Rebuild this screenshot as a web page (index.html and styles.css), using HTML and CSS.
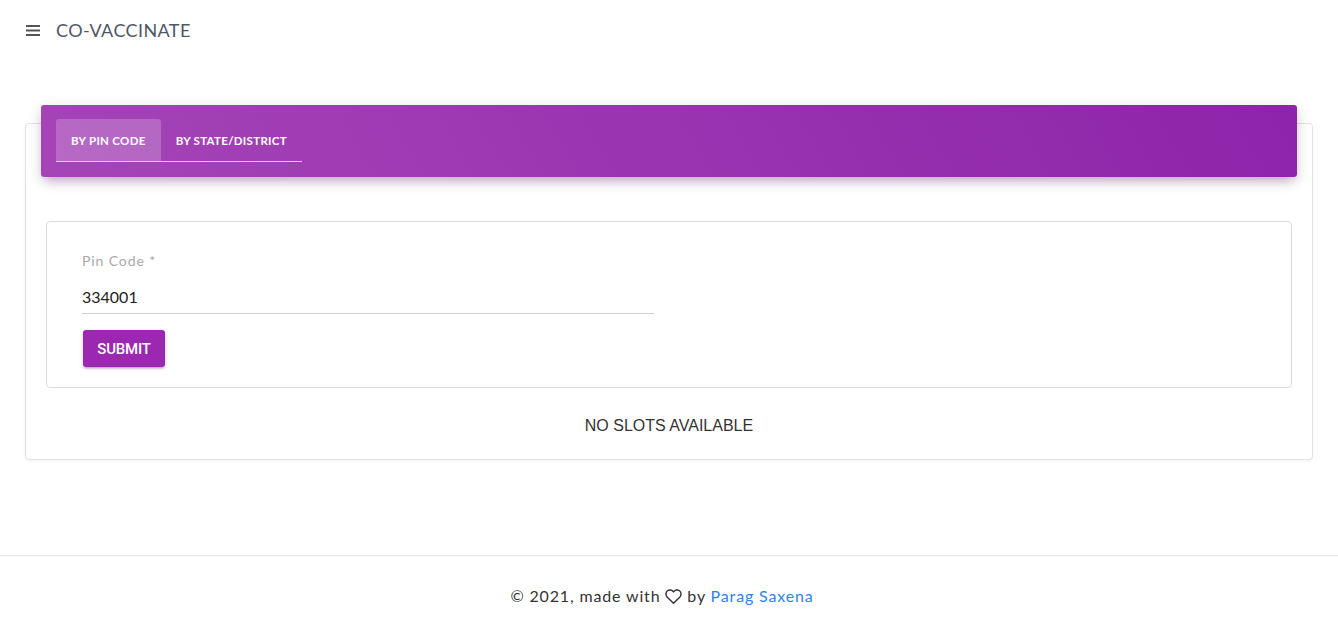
FILE: index.html
```html
<!DOCTYPE html>
<html lang="en">
<head>
<meta charset="utf-8">
<title>Co-Vaccinate</title>
<link rel="stylesheet" href="styles.css">
</head>
<body>
<header class="topbar">
  <svg class="menu-icon" width="14" height="11" viewBox="0 0 14 11" aria-hidden="true">
    <rect x="0" y="0" width="14" height="2" fill="#555"/>
    <rect x="0" y="4.5" width="14" height="2" fill="#555"/>
    <rect x="0" y="9" width="14" height="2" fill="#555"/>
  </svg>
  <span class="brand">CO-VACCINATE</span>
</header>

<main class="content">
  <section class="card">
    <div class="card-header">
      <nav class="tabs">
        <span class="tab active">BY PIN CODE</span>
        <span class="tab">BY STATE/DISTRICT</span>
      </nav>
    </div>
    <div class="card-body">
      <div class="form-card">
        <label class="field-label">Pin Code *</label>
        <div class="field-input">334001</div>
        <button class="submit-btn">SUBMIT</button>
      </div>
      <p class="no-slots">NO SLOTS AVAILABLE</p>
    </div>
  </section>
</main>

<footer class="footer">
  <p class="footer-text">© 2021, made with
    <svg class="heart" width="17" height="15" viewBox="0 0 24 21" aria-hidden="true"><path d="M12 20 L3.2 11.4 C0.6 8.8 0.8 4.6 3.6 2.4 C6.2 0.4 9.8 1 12 4 C14.2 1 17.8 0.4 20.4 2.4 C23.2 4.6 23.4 8.8 20.8 11.4 Z" fill="none" stroke="#333" stroke-width="2" stroke-linejoin="round"/></svg>
    by <a class="author" href="#">Parag Saxena</a></p>
</footer>
</body>
</html>
```

FILE: styles.css
```css
* { box-sizing: border-box; }
html, body { margin: 0; padding: 0; background: #fff; }
body {
  font-family: "Lato", "Open Sans", sans-serif;
  color: #333;
  width: 1338px;
  height: 618px;
  overflow: hidden;
}

.topbar {
  height: 60px;
  display: flex;
  align-items: center;
  padding-left: 26px;
}
.menu-icon { display: block; margin-right: 16px; }
.brand {
  font-size: 18px;
  letter-spacing: 0.4px;
  color: #4f5766;
  line-height: 1;
}

.content {
  padding: 63px 25px 0;
  height: 495px;
}

.card {
  border: 1px solid #e3e3e3;
  border-radius: 4px;
  box-shadow: 0 1px 3px rgba(0,0,0,0.06);
  height: 337px;
  background: #fff;
}

.card-header {
  margin: -19px 15px 0;
  height: 72px;
  border-radius: 3px;
  background: linear-gradient(60deg, #a544b7, #8e24aa);
  box-shadow: 0 4px 14px rgba(0,0,0,0.16), 0 7px 10px -5px rgba(156,39,176,0.35);
  padding: 14px 15px 0;
}
.tabs {
  display: inline-flex;
  border-bottom: 1px solid rgba(255,255,255,0.7);
}
.tab {
  height: 42px;
  display: flex;
  align-items: center;
  padding: 0 15px;
  color: #fff;
  font-size: 11.5px;
  font-weight: 700;
  letter-spacing: 0.3px;
  border-radius: 3px 3px 0 0;
}
.tab.active { background: rgba(255,255,255,0.2); }

.card-body {
  padding: 44px 20px 0;
}

.form-card {
  border: 1px solid #dcdcdc;
  border-radius: 4px;
  height: 167px;
  padding: 29px 35px 0;
  display: flex;
  flex-direction: column;
  align-items: flex-start;
}
.field-label {
  font-size: 14px;
  letter-spacing: 0.9px;
  color: #a9a9a9;
  line-height: 20px;
}
.field-input {
  width: 572px;
  font-size: 16px;
  color: #222;
  line-height: 20px;
  margin-top: 16px;
  padding-bottom: 6px;
  border-bottom: 1px solid #d2d2d2;
}
.submit-btn {
  margin-top: 16px;
  margin-left: 1px;
  height: 37px;
  width: 82px;
  border: 0;
  border-radius: 3px;
  background: #9c27b0;
  color: #fff;
  font-family: "Roboto", "Liberation Sans", Arial, sans-serif;
  font-weight: 500;
  font-size: 15px;
  letter-spacing: -0.2px;
  box-shadow: 0 2px 2px rgba(156,39,176,0.2), 0 3px 1px -2px rgba(156,39,176,0.2), 0 1px 5px rgba(0,0,0,0.12);
  padding: 0;
}

.no-slots {
  margin: 29px 0 0;
  text-align: center;
  font-family: "Liberation Sans", Arial, sans-serif;
  font-size: 16px;
  color: #333;
  line-height: 18px;
}

.footer {
  border-top: 1px solid #e5e5e5;
  height: 63px;
}
.footer-text {
  margin: 30px 0 0;
  padding-right: 14px;
  text-align: center;
  font-size: 16px;
  letter-spacing: 0.85px;
  color: #333;
  line-height: 20px;
}
.heart { vertical-align: -2px; }
.author { color: #2e82f2; text-decoration: none; }
```
